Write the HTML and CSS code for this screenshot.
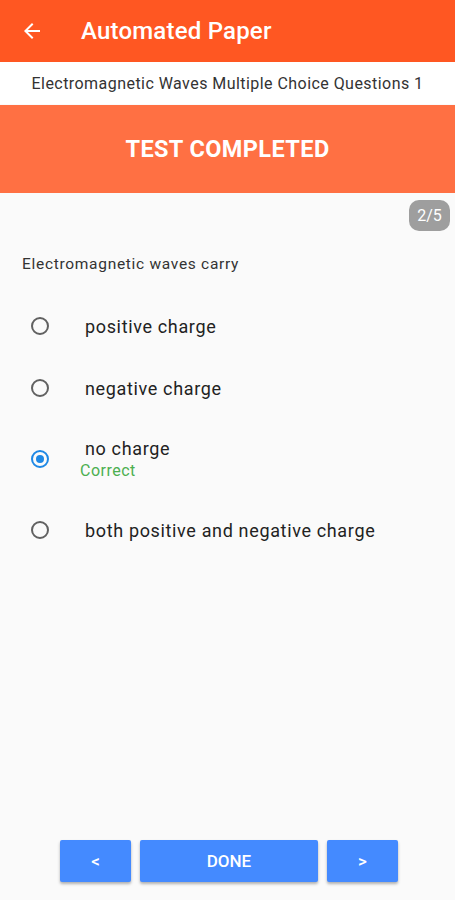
FILE: index.html
```html
<!DOCTYPE html>
<html>
<head>
<meta charset="utf-8">
<link rel="stylesheet" href="styles.css">
</head>
<body>
<div class="screen">
  <header class="appbar">
    <svg class="back" width="24" height="24" viewBox="0 0 24 24"><path d="M20 11H7.83l5.59-5.59L12 4l-8 8 8 8 1.41-1.41L7.83 13H20v-2z" fill="#fff"/></svg>
    <span class="title">Automated Paper</span>
  </header>
  <div class="subtitle">Electromagnetic Waves Multiple Choice Questions 1</div>
  <div class="banner">TEST COMPLETED</div>
  <div class="countrow"><span class="badge">2/5</span></div>
  <div class="question">Electromagnetic waves carry</div>
  <ul class="options">
    <li class="opt"><span class="radio"></span><div class="otext"><span class="label">positive charge</span></div></li>
    <li class="opt"><span class="radio"></span><div class="otext"><span class="label">negative charge</span></div></li>
    <li class="opt sel"><span class="radio on"></span><div class="otext"><span class="label">no charge</span><span class="correct">Correct</span></div></li>
    <li class="opt"><span class="radio"></span><div class="otext"><span class="label">both positive and negative charge</span></div></li>
  </ul>
  <div class="spacer"></div>
  <nav class="buttons">
    <button class="btn small">&lt;</button>
    <button class="btn wide">DONE</button>
    <button class="btn small">&gt;</button>
  </nav>
</div>
</body>
</html>
```
FILE: styles.css
```css
html, body { margin: 0; padding: 0; }
body { background: #fafafa; font-family: Roboto, "Noto Sans", sans-serif; }
.screen { width: 455px; height: 900px; display: flex; flex-direction: column; background: #fafafa; overflow: hidden; }
.appbar { height: 62px; background: #ff5722; display: flex; align-items: center; flex-shrink: 0; }
.back { margin-left: 20px; width: 24px; height: 24px; }
.title { margin-left: 37px; color: #fff; font-size: 24px; font-weight: 500; letter-spacing: 0.2px; }
.subtitle { height: 42px; background: #fff; display: flex; align-items: center; justify-content: center; font-size: 16px; letter-spacing: 0.45px; color: #333; flex-shrink: 0; }
.banner { height: 88px; background: #ff7043; color: #fff; font-weight: 700; font-size: 23.5px; letter-spacing: 0.4px; display: flex; align-items: center; justify-content: center; flex-shrink: 0; margin-top: 1px; }
.countrow { display: flex; justify-content: flex-end; padding: 7px 5px 0 0; }
.badge { background: #9e9e9e; color: #fff; font-size: 16px; border-radius: 10px; width: 41px; height: 31px; display: flex; align-items: center; justify-content: center; }
.question { font-size: 15.5px; letter-spacing: 0.7px; color: #333; padding: 24px 0 0 22px; }
.options { list-style: none; margin: 0; padding: 22px 0 0 0; }
.opt { display: flex; align-items: center; height: 62px; }
.opt.sel { height: 80px; }
.radio { width: 14px; height: 14px; border: 2px solid #616161; border-radius: 50%; margin-left: 31px; margin-right: 36px; flex-shrink: 0; box-sizing: content-box; }
.radio.on { border-color: #1e88e5; position: relative; }
.radio.on::after { content: ""; position: absolute; left: 3px; top: 3px; width: 8px; height: 8px; border-radius: 50%; background: #1e88e5; }
.otext { display: flex; flex-direction: column; }
.label { font-size: 18px; color: #222; letter-spacing: 0.65px; }
.correct { font-size: 16px; color: #4caf50; margin-left: -5px; margin-top: 2px; letter-spacing: 0.5px; }
.spacer { flex: 1; }
.buttons { display: flex; justify-content: center; gap: 9px; padding: 0 0 18px 3px; }
.btn { height: 42px; border: none; border-radius: 2px; background: #448aff; color: #fff; font-family: Roboto, sans-serif; font-weight: 500; font-size: 17px; box-shadow: 0 2px 3px rgba(0,0,0,0.3); }
.btn.small { width: 71px; }
.btn.wide { width: 178px; }
```
